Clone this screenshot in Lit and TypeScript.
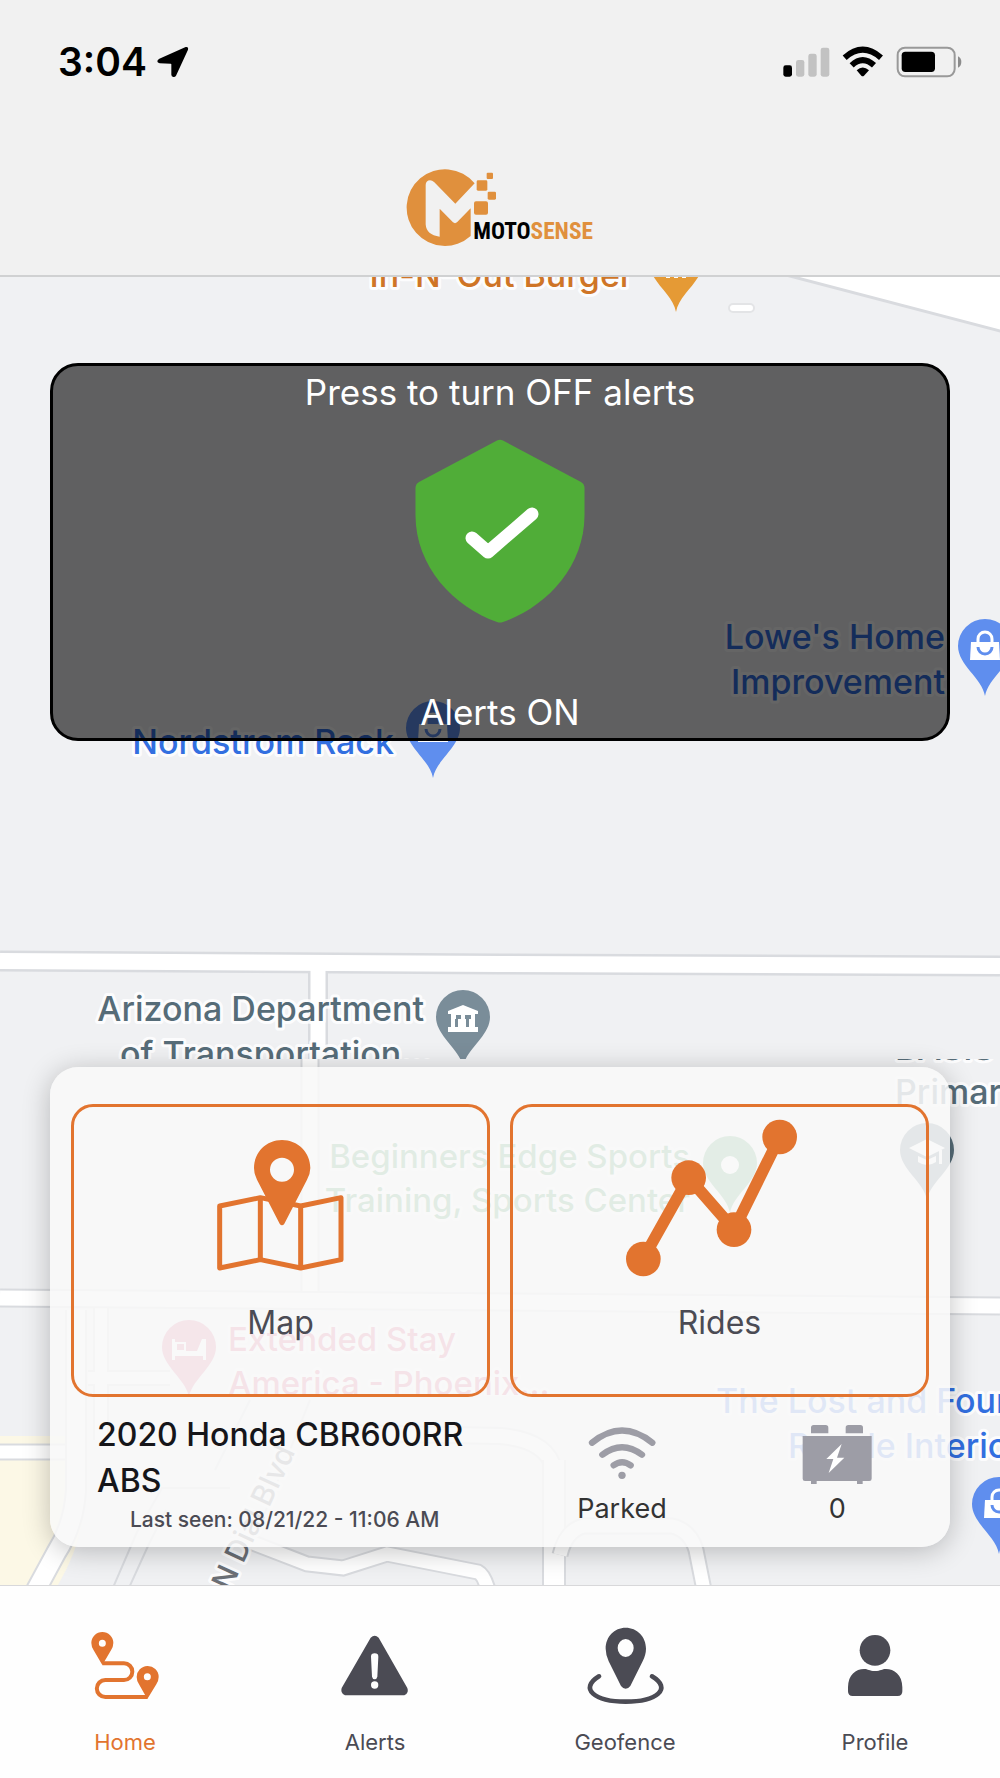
import { LitElement, html, css, svg } from "lit";
import { customElement, property, state } from "lit/decorators.js";

const pin = (x: number, y: number, color: string, glyph: unknown) => svg`
  <g transform="translate(${x} ${y})">
    <path d="M0 0C-3-18-27-31-27-50A27 27 0 0 1 27-50C27-31 3-18 0 0Z" fill=${color}/>
    <g fill="#fff">${glyph}</g>
  </g>`;

const bag = svg`
  <path d="M-14-54H14L15-36H-15Z"/>
  <path d="M-7-54V-57A7 7 0 0 1 7-57V-54" fill="none" stroke="#fff" stroke-width="3"/>
  <path d="M-7-49A7 7 0 0 0 7-49" fill="none" stroke="#5f8eee" stroke-width="3"/>`;
const bank = svg`<path d="M-15-56L0-62L15-56V-53H12V-40H15V-35H-15V-40H-12V-53H-15ZM-7-52V-48H-8V-40H-5V-48H-2V-52ZM2-52V-48H3V-40H6V-48H8V-52Z" fill-rule="evenodd"/>`;
const cap = svg`<path d="M-18-52L0-61L18-52L0-43ZM-9-44L0-40L9-44V-38Q0-32-9-38ZM12-50H15V-36H12Z"/>`;
const bed = svg`<path d="M-17-58H-14V-55H-3V-46H8L13-58H17V-37H14V-41H-14V-37H-17ZM-12-53H-5V-47H-12Z" fill-rule="evenodd"/>`;
const dot = svg`<circle cx="0" cy="-48" r="9"/>`;

@customElement("street-map")
export class StreetMap extends LitElement {
  static styles = css`
    :host { display: block; overflow: hidden; background: #f0f1f3; }
    .canvas { display: block; width: 100%; height: 100%; }
    .edge { fill: none; stroke: #d9dbdf; }
    .road { fill: none; stroke: #fff; }
    .label {
      font-family: Inter, "Liberation Sans", sans-serif;
      font-size: 34px;
      font-weight: 500;
      paint-order: stroke;
      stroke: #fff;
      stroke-opacity: 0.85;
      stroke-width: 6px;
      stroke-linejoin: round;
    }
    .end { text-anchor: end; }
    .food { fill: #cf7527; }
    .shop { fill: #326fe0; }
    .civic { fill: #566c78; }
    .park { fill: #3f9150; font-size: 33px; }
    .hotel { fill: #d94a74; font-size: 33px; }
    .street { fill: #6b6f75; font-size: 30px; }
  `;

  private road(d: string, width: number) {
    return [
      svg`<path class="edge" d=${d} stroke-width=${width + 4}/>`,
      svg`<path class="road" d=${d} stroke-width=${width}/>`,
    ];
  }

  render() {
    const lanes: [string, number][] = [
      ["M310 1050V1300", 15],
      ["M101 1306V1380M170 1378H88M101 1380V1440", 12],
      ["M300 1432L500 1436Q548 1440 554 1470", 14],
      ["M240 1538L307 1564L343 1568L387 1554L478 1572Q484 1575 488 1590", 13],
      ["M554 1460V1590", 20],
      ["M560 1555Q566 1530 584 1526L672 1526Q690 1530 696 1550L704 1590", 13],
      ["M0 1452H80", 13],
      ["M76 1310V1490Q74 1525 56 1553L36 1590", 18],
      ["M0 1298L1000 1306", 15],
    ];
    return html`
      <svg class="canvas" viewBox="0 277 1000 1308" preserveAspectRatio="xMidYMid slice" role="img" aria-label="Map">
        <defs>
          <clipPath id="upper"><rect x="-500" y="0" width="2000" height="1059"/></clipPath>
          <clipPath id="lower"><rect x="-500" y="1059" width="2000" height="900"/></clipPath>
          <clipPath id="tile"><rect x="-500" y="1059" width="2000" height="337"/></clipPath>
        </defs>
        <g clip-path="url(#upper)">
          <path d="M790 276L1000 331V276Z" fill="#fff"/>
          <path class="edge" d="M786 275L1004 332" stroke-width="3"/>
          <rect x="729" y="304" width="25" height="8" rx="4" fill="#fff" stroke="#e3e4e6" stroke-width="2"/>
          <path class="edge" d="M318 965V1070" stroke-width="20"/>
          <path class="edge" d="M0 961L500 964L1000 966" stroke-width="21"/>
          <path class="road" d="M0 961L500 964L1000 966" stroke-width="16"/>
          <path class="road" d="M318 965V1070" stroke-width="15"/>
          <text class="label food end" x="633" y="287">In-N-Out Burger</text>
          ${pin(676, 312, "#e59a35", svg`<path d="M-10-41H-6V-34H-10ZM-2-41H2V-34H-2ZM6-41H10V-34H6Z"/>`)}
          <text class="label shop end" x="945" y="649">Lowe's Home</text>
          <text class="label shop end" x="945" y="694">Improvement</text>
          ${pin(985, 696, "#5f8eee", bag)}
          <text class="label shop end" x="394" y="754">Nordstrom Rack</text>
          ${pin(433, 778, "#5f8eee", bag)}
          <text class="label civic end" x="424" y="1021">Arizona Department</text>
          <text class="label civic" x="120" y="1066">of Transportation…</text>
          ${pin(463, 1067, "#7a8d99", bank)}
        </g>
        <g clip-path="url(#lower)">
          <path d="M0 1436H84V1500Q84 1540 58 1585H0Z" fill="#fcf8e6"/>
          <path class="edge" d="M112 1590L137 1532L162 1488H230M128 1590L148 1546L166 1510M250 1400L215 1470M310 1400L262 1520" stroke-width="2"/>
          ${lanes.map(([d, w]) => this.road(d, w))}
          <text class="label civic" x="895" y="1060">BASIS</text>
          <text class="label civic" x="895" y="1104">Primary</text>
          ${pin(927, 1200, "#566c78", cap)}
          <text class="label park end" x="690" y="1168">Beginners Edge Sports</text>
          <text class="label park end" x="690" y="1212">Training, Sports Center</text>
          ${pin(730, 1213, "#4c9f60", dot)}
          <text class="label shop" x="716" y="1413">The Lost and Found</text>
          <text class="label shop" x="788" y="1458">Resale Interiors</text>
          ${pin(999, 1554, "#5f8eee", bag)}
          <text class="label street" transform="translate(230 1592) rotate(-65)">N Dial Blvd</text>
        </g>
        <g clip-path="url(#tile)">
          <text class="label hotel" x="228" y="1351">Extended Stay</text>
          <text class="label hotel" x="228" y="1395">America - Phoenix…</text>
          ${pin(189, 1397, "#dd6086", bed)}
        </g>
      </svg>`;
  }
}

@customElement("status-bar")
export class StatusBar extends LitElement {
  static styles = css`
    :host { display: flex; justify-content: space-between; align-items: center; padding: 42px 38px 0 58px; height: 40px; }
    .left, .right { display: flex; align-items: center; }
    .left { gap: 10px; }
    .time { font: 600 39px/40px Inter, "Liberation Sans", sans-serif; }
    svg { display: block; }
  `;
  render() {
    return html`
      <div class="left">
        <span class="time">3:04</span>
        <svg width="32" height="32" viewBox="320 48 96 96" aria-hidden="true">
          <path d="M406 51Q415 49 413 59L377 137Q374 142 369 141Q363 140 363 134V103Q363 101 361 101L328 100Q321 99 321 94Q321 89 327 86Z" fill="#000"/>
        </svg>
      </div>
      <div class="right">
        <svg width="180" height="32" viewBox="66 46 540 96" aria-hidden="true">
          <rect x="70" y="104" width="26" height="34" rx="7"/>
          <g fill="#c2c2c2">
            <rect x="108" y="88" width="25" height="50" rx="7"/>
            <rect x="145" y="69" width="25" height="69" rx="7"/>
            <rect x="182" y="51" width="26" height="87" rx="7"/>
          </g>
          <g fill="none" stroke="#000" stroke-width="18">
            <path d="M254 81Q308 33 363 81"/>
            <path d="M275 104Q308 73 342 104"/>
          </g>
          <path d="M290 119Q308 102 327 119L312 135Q308 139 304 135Z"/>
          <rect x="413" y="51" width="171" height="86" rx="22" fill="none" stroke="#999" stroke-width="6"/>
          <rect x="425" y="63" width="100" height="61" rx="11"/>
          <path d="M594 77Q604 82 604 94T594 111Z" fill="#8c8c8c"/>
        </svg>
      </div>`;
  }
}

@customElement("brand-logo")
export class BrandLogo extends LitElement {
  static styles = css`
    :host { display: block; }
    svg { display: block; width: 188px; height: 78px; }
    .word { font-family: "Liberation Sans Narrow", "Roboto Condensed", "Liberation Sans", sans-serif; font-weight: 700; font-size: 70px; }
    .orange { fill: #e0903d; }
  `;
  render() {
    return html`
      <svg viewBox="78 56 564 234" role="img" aria-label="Motosense">
        <path class="orange" d="M284 99L226 160L163 96C152 84 137 90 137 104V222Q139 254 179 259V175L219 216Q225 221 231 216L272 174V257A115 115 0 1 1 284 99Z"/>
        <g class="orange">
          <rect x="320" y="67" width="19" height="19" rx="3"/>
          <rect x="290" y="90" width="32" height="31" rx="4"/>
          <rect x="323" y="124" width="25" height="24" rx="4"/>
          <rect x="282" y="153" width="42" height="40" rx="6"/>
        </g>
        <text class="word" x="280" y="266">MOTO<tspan class="orange">SENSE</tspan></text>
      </svg>`;
  }
}

@customElement("alert-toggle")
export class AlertToggle extends LitElement {
  @state() private on = true;
  static styles = css`
    :host { display: block; }
    .panel {
      display: flex; flex-direction: column; align-items: center;
      width: 100%; box-sizing: border-box; padding: 3px 20px; margin: 0;
      border: 3px solid #000; border-radius: 28px;
      background: rgba(0, 0, 0, 0.6); color: #fff;
      font: 400 35px/46px Inter, "Liberation Sans", sans-serif;
      cursor: pointer;
    }
    .shield { display: block; width: 170px; height: 184px; margin: 24px 0 66px; }
  `;
  render() {
    return html`
      <button class="panel" type="button" aria-pressed=${this.on} @click=${() => (this.on = !this.on)}>
        <span>Press to turn ${this.on ? "OFF" : "ON"} alerts</span>
        <svg class="shield" viewBox="0 0 170 184" aria-hidden="true">
          <path d="M82 1.500Q85 0 88 1.500L166 43Q169.500 45 169.500 49V76C169.500 128 131 168 88 183Q85 184 82 183C39 168 .5 128 .5 76V49Q.5 45 4 43Z" fill=${this.on ? "#50ad38" : "#9d9da6"}/>
          <path d="M57 99L73 113L117 75" fill="none" stroke="#fff" stroke-width="13" stroke-linecap="round" stroke-linejoin="round"/>
        </svg>
        <span>Alerts ${this.on ? "ON" : "OFF"}</span>
      </button>`;
  }
}

@customElement("vehicle-card")
export class VehicleCard extends LitElement {
  static styles = css`
    :host {
      display: block; box-sizing: border-box; padding: 37px 21px 11px;
      border-radius: 28px; background: rgba(248, 248, 248, 0.88);
      box-shadow: 0 4px 28px rgba(0, 0, 0, 0.24);
      font-family: Inter, "Liberation Sans", sans-serif; color: #16161a;
    }
    .tiles { display: grid; grid-template-columns: 1fr 1fr; gap: 20px; }
    .tile {
      display: flex; flex-direction: column; align-items: center;
      margin: 0; padding: 0 0 48px; border: 3px solid #e2742f; border-radius: 22px;
      background: none; color: #4b4b54; font: 400 32px/46px Inter, "Liberation Sans", sans-serif;
      cursor: pointer;
    }
    .art { display: flex; align-items: flex-end; height: 170px; margin-bottom: 23px; }
    svg { display: block; }
    .info { display: grid; grid-template-columns: 31fr 16fr 16fr; margin-right: -16px; padding: 15px 0 0 26px; }
    .vehicle { padding-right: 42px; }
    .name { margin: 0; font-size: 32px; line-height: 46px; font-weight: 500; }
    .seen { margin: 0; text-align: center; font-size: 21px; line-height: 32px; font-weight: 500; color: #4b4b54; }
    .stat { display: flex; flex-direction: column; align-items: center; gap: 4px; padding-top: 9px; font-size: 27px; line-height: 36px; color: #333; }
  `;
  render() {
    return html`
      <div class="tiles">
        <button class="tile" type="button">
          <span class="art">
            <svg width="140" height="140" viewBox="632 590 420 420" aria-hidden="true">
              <g fill="none" stroke="#e2742f" stroke-width="15" stroke-linejoin="round">
                <path d="M658 797L780 772L901 797L1022 772V958L901 983L780 958L658 983Z"/>
                <path d="M780 772V958M901 797V983"/>
              </g>
              <path fill-rule="evenodd" d="M845 599C798 599 761 636 761 683Q761 700 770 718L838 850Q845 860 852 850L920 718Q930 700 930 683C930 636 892 599 845 599ZM845 652A36 36 0 1 1 845 724A36 36 0 1 1 845 652Z" fill="#e2742f"/>
            </svg>
          </span>
          <span>Map</span>
        </button>
        <button class="tile" type="button">
          <span class="art">
            <svg width="188" height="158" viewBox="378 536 564 474" aria-hidden="true">
              <path d="M429 956L566 712L702 868L839 590" fill="none" stroke="#e2742f" stroke-width="35"/>
              <g fill="#e2742f">
                <circle cx="430" cy="956" r="52"/><circle cx="566" cy="712" r="52"/>
                <circle cx="702" cy="868" r="52"/><circle cx="839" cy="590" r="52"/>
              </g>
            </svg>
          </span>
          <span>Rides</span>
        </button>
      </div>
      <div class="info">
        <div class="vehicle">
          <h2 class="name">2020 Honda CBR600RR ABS</h2>
          <p class="seen">Last seen: 08/21/22 - 11:06 AM</p>
        </div>
        <div class="stat">
          <svg width="70" height="66" viewBox="264 483 210 198" aria-hidden="true">
            <g fill="none" stroke="#9d9da6" stroke-width="19" stroke-linecap="round">
              <path d="M279 548Q369 475 460 548"/>
              <path d="M310 584Q369 539 429 584"/>
              <path d="M344 616Q369 597 395 616"/>
            </g>
            <circle cx="369" cy="646" r="11" fill="#9d9da6"/>
          </svg>
          <span>Parked</span>
        </div>
        <div class="stat">
          <svg width="70" height="66" viewBox="907 483 210 198" aria-hidden="true">
            <g fill="#9d9da6">
              <path d="M934 520V503Q934 495 942 495H978Q986 495 986 503V520ZM1038 520V503Q1038 495 1046 495H1082Q1090 495 1090 503V520Z"/>
              <path d="M909 528H1116V656Q1116 663 1109 663H1089V672H1072V663H951V672H934V663H916Q909 663 909 656Z"/>
            </g>
            <path d="M1026 552L980 597H1001L987 639L1034 593H1012Z" fill="#fff"/>
          </svg>
          <span>0</span>
        </div>
      </div>`;
  }
}

const tabIcons: Record<string, unknown> = {
  home: svg`<svg viewBox="60 60 270 270" aria-hidden="true">
    <path d="M127 190H192A25 25 0 0 1 192 240H136A25 25 0 0 0 136 291H262" fill="none" stroke="currentColor" stroke-width="12"/>
    <path fill="currentColor" fill-rule="evenodd" d="M127 96A33 33 0 0 0 94 129Q94 140 101 151L127 195L153 151Q160 140 160 129A33 33 0 0 0 127 96ZM127 119A10.500 10.500 0 1 1 127 140A10.500 10.500 0 1 1 127 119ZM262 198A33 33 0 0 0 230 231Q230 242 237 253L262 297L289 253Q296 242 296 231A33 33 0 0 0 262 198ZM262 220A10.500 10.500 0 1 1 262 241A10.500 10.500 0 1 1 262 220Z"/>
  </svg>`,
  alerts: svg`<svg viewBox="810 60 270 270" aria-hidden="true">
    <path fill="currentColor" fill-rule="evenodd" d="M932 113Q944 101 956 113L1042 264Q1048 280 1033 286H855Q840 280 845 264ZM944 160Q933 160 933 170L936 230Q938 238 944 238T952 230L955 170Q955 160 944 160ZM944 244A11 11 0 1 0 944 266A11 11 0 1 0 944 244Z"/>
  </svg>`,
  geofence: svg`<svg viewBox="60 60 270 270" aria-hidden="true">
    <path fill="currentColor" fill-rule="evenodd" d="M197 83C163 83 137 110 137 146Q137 163 146 184L183 258Q189 266 197 266T211 258L248 184Q258 163 258 146C258 110 231 83 197 83ZM197 117A24 27 0 1 1 197 171A24 27 0 1 1 197 117Z"/>
    <path d="M117 229C56 266 104 305 197 305S338 266 276 229" fill="none" stroke="currentColor" stroke-width="14" stroke-linecap="round"/>
  </svg>`,
  profile: svg`<svg viewBox="810 60 270 270" aria-hidden="true">
    <circle cx="945" cy="151" r="46" fill="currentColor"/>
    <path d="M864 262C864 224 888 207 912 207C925 207 927 213 945 213S965 207 978 207C1002 207 1027 224 1027 262V274Q1027 288 1013 288H878Q864 288 864 274Z" fill="currentColor"/>
  </svg>`,
};

@customElement("tab-bar")
export class TabBar extends LitElement {
  @property() current = "home";
  static styles = css`
    :host { display: block; background: #fefefe; border-top: 1px solid #d8d8da; }
    .tabs { display: grid; grid-template-columns: repeat(4, 1fr); padding: 34px 0 21px; }
    .tab {
      display: flex; flex-direction: column; align-items: center; gap: 17px;
      color: #4b4b54; text-decoration: none;
      font: 400 22px/30px Inter, "Liberation Sans", sans-serif;
    }
    .tab svg { display: block; width: 90px; height: 90px; }
    .active { color: #e2742f; }
  `;
  render() {
    const tabs = [["home", "Home"], ["alerts", "Alerts"], ["geofence", "Geofence"], ["profile", "Profile"]];
    return html`
      <nav class="tabs">
        ${tabs.map(([id, label]) => html`
          <a class="tab ${id === this.current ? "active" : ""}" href="#${id}">
            ${tabIcons[id]}<span>${label}</span>
          </a>`)}
      </nav>`;
  }
}

@customElement("app-root")
export class AppRoot extends LitElement {
  static styles = css`
    :host { display: flex; flex-direction: column; min-height: 100vh; background: #f1f1f1; }
    .header { display: flex; flex-direction: column; border-bottom: 2px solid #d0d1d2; }
    .logo { align-self: center; margin: 87px 0 28px; }
    .main { flex: 1; display: flex; flex-direction: column; justify-content: space-between; position: relative; padding: 86px 50px 38px; }
    .map { position: absolute; inset: 0; }
    .over { position: relative; }
  `;
  render() {
    return html`
      <header class="header">
        <status-bar></status-bar>
        <brand-logo class="logo"></brand-logo>
      </header>
      <main class="main">
        <street-map class="map"></street-map>
        <alert-toggle class="over"></alert-toggle>
        <vehicle-card class="over"></vehicle-card>
      </main>
      <tab-bar></tab-bar>`;
  }
}
